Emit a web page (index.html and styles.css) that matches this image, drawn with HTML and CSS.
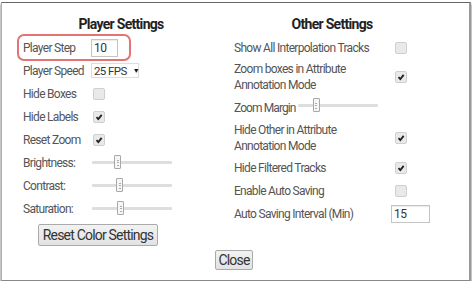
FILE: index.html
```html
<!DOCTYPE html>
<html lang="en">
<head>
    <meta charset="UTF-8">
    <title>Settings</title>
    <link rel="stylesheet" href="styles.css">
</head>
<body>

<div class="dialog">
    <div class="columns">
        <div class="col col-player">
            <h2>Player Settings</h2>
            <div class="row highlight">
                <label>Player Step</label>
                <input class="num num-step" type="text" value="10">
            </div>
            <div class="row">
                <label>Player Speed</label>
                <span class="select">25 FPS <span class="arrow">&#9660;</span></span>
            </div>
            <div class="row">
                <label>Hide Boxes</label>
                <span class="check"></span>
            </div>
            <div class="row">
                <label>Hide Labels</label>
                <span class="check checked"><svg viewBox="0 0 12 12"><path d="M3 6.2l2.2 2.3 4-5"/></svg></span>
            </div>
            <div class="row">
                <label>Reset Zoom</label>
                <span class="check checked"><svg viewBox="0 0 12 12"><path d="M3 6.2l2.2 2.3 4-5"/></svg></span>
            </div>
            <div class="row">
                <label>Brightness:</label>
                <span class="slider"><span class="thumb" style="left: 22px"></span></span>
            </div>
            <div class="row">
                <label>Contrast:</label>
                <span class="slider"><span class="thumb" style="left: 24px"></span></span>
            </div>
            <div class="row">
                <label>Saturation:</label>
                <span class="slider"><span class="thumb" style="left: 25px"></span></span>
            </div>
            <button class="btn btn-reset">Reset Color Settings</button>
        </div>

        <div class="col col-other">
            <h2>Other Settings</h2>
            <div class="row">
                <label>Show All Interpolation Tracks</label>
                <span class="check"></span>
            </div>
            <div class="row tall">
                <label>Zoom boxes in Attribute<br>Annotation Mode</label>
                <span class="check checked"><svg viewBox="0 0 12 12"><path d="M3 6.2l2.2 2.3 4-5"/></svg></span>
            </div>
            <div class="row margin-row">
                <label class="inline">Zoom Margin</label>
                <span class="slider"><span class="thumb" style="left: 15px"></span></span>
            </div>
            <div class="row tall">
                <label>Hide Other in Attribute<br>Annotation Mode</label>
                <span class="check checked"><svg viewBox="0 0 12 12"><path d="M3 6.2l2.2 2.3 4-5"/></svg></span>
            </div>
            <div class="row">
                <label>Hide Filtered Tracks</label>
                <span class="check checked"><svg viewBox="0 0 12 12"><path d="M3 6.2l2.2 2.3 4-5"/></svg></span>
            </div>
            <div class="row">
                <label>Enable Auto Saving</label>
                <span class="check"></span>
            </div>
            <div class="row">
                <label>Auto Saving Interval (Min)</label>
                <input class="num num-interval" type="text" value="15">
            </div>
        </div>
    </div>

    <div class="footer">
        <button class="btn btn-close">Close</button>
    </div>
</div>

</body>
</html>
```

FILE: styles.css
```css
body {
    margin: 0;
    background-color: white;
    font-family: Roboto, "Liberation Sans", sans-serif;
    font-size: 12px;
    color: #555;
}
.dialog {
    margin: 2px 0 0 1px;
    width: 467px;
    height: 277px;
    border: 1px solid #b0b0b0;
    border-top-color: #666;
    border-right: 2px solid #999;
    border-bottom: 1px solid #888;
    box-shadow: 0 2px 2px rgba(0, 0, 0, 0.7);
    background-color: white;
}
.columns {
    display: flex;
    padding-left: 17px;
}
.col {
    display: flex;
    flex-direction: column;
}
.col-player {
    width: 204px;
}
.col-other {
    width: 212px;
    margin-left: 3px;
}
h2 {
    margin: 12px 0 3px;
    font-size: 14px;
    line-height: 18px;
    letter-spacing: -0.7px;
    text-align: center;
    color: #222;
}
.row {
    display: flex;
    align-items: center;
    height: 23px;
    letter-spacing: -0.7px;
}
.row label {
    flex: none;
    line-height: 16px;
}
.col-player .row label {
    width: 68px;
    padding-left: 4px;
}
.col-other .row label {
    width: 157px;
    padding-left: 8px;
}
.col-other .row label.inline {
    width: auto;
    margin-right: 0;
    letter-spacing: -0.9px;
}
.row.tall {
    height: 36px;
}
.row.margin-row {
    height: 25px;
}
.row.highlight {
    width: 110px;
    outline: 2px solid #e57373;
    border-radius: 5px;
}
.num {
    box-sizing: border-box;
    height: 18px;
    padding: 0 2px;
    border: 1px solid #c4c4c4;
    box-shadow: inset 0 1px 1px rgba(0, 0, 0, 0.08);
    font-family: inherit;
    font-size: 12px;
    letter-spacing: -0.6px;
    color: #333;
    outline: none;
}
.num-step {
    width: 27px;
}
.num-interval {
    width: 39px;
}
.select {
    flex: none;
    box-sizing: border-box;
    display: flex;
    align-items: center;
    width: 48px;
    height: 15px;
    padding-left: 2px;
    border: 1px solid #ddd;
    white-space: nowrap;
    color: #333;
    font-size: 11.5px;
    letter-spacing: -0.6px;
}
.arrow {
    margin-left: 6px;
    font-size: 7px;
    color: #111;
}
.check {
    flex: none;
    box-sizing: border-box;
    display: flex;
    align-items: center;
    justify-content: center;
    width: 12px;
    height: 12px;
    margin-left: 2px;
    border: 1px solid #cfcfcf;
    border-radius: 2px;
    background-color: #e9e9e9;
}
.col-other .check {
    margin-left: 4px;
}
.check svg {
    width: 10px;
    height: 10px;
}
.check svg path {
    fill: none;
    stroke: #222;
    stroke-width: 2.2;
}
.slider {
    flex: none;
    position: relative;
    width: 80px;
    height: 3px;
    margin-left: 1px;
    background-color: #dedede;
    border-radius: 1px;
}
.margin-row .slider {
    margin-left: 2px;
    margin-top: -5px;
}
.thumb {
    position: absolute;
    top: -6px;
    box-sizing: border-box;
    width: 7px;
    height: 14px;
    border: 1px solid #a8a8a8;
    border-radius: 1px;
    background-color: #f6f6f6;
}
.thumb::after {
    content: "";
    position: absolute;
    left: 1.5px;
    top: 4px;
    width: 2px;
    height: 4px;
    border-top: 1px solid #aaa;
    border-bottom: 1px solid #aaa;
    background: linear-gradient(#f6f6f6 0 1px, #aaa 1px 2px, #f6f6f6 2px);
}
.btn {
    box-sizing: border-box;
    font-family: inherit;
    font-size: 14px;
    letter-spacing: -0.8px;
    color: #333;
    background: linear-gradient(#f2f2f2, #e2e2e2);
    border: 1px solid #aaa;
    border-radius: 2px;
    padding: 0;
}
.btn-reset {
    align-self: flex-start;
    width: 120px;
    height: 22px;
    margin: 4px 0 0 19px;
}
.footer {
    display: flex;
    justify-content: center;
    margin-top: 4px;
    padding-right: 3px;
}
.btn-close {
    width: 38px;
    height: 20px;
}
```
